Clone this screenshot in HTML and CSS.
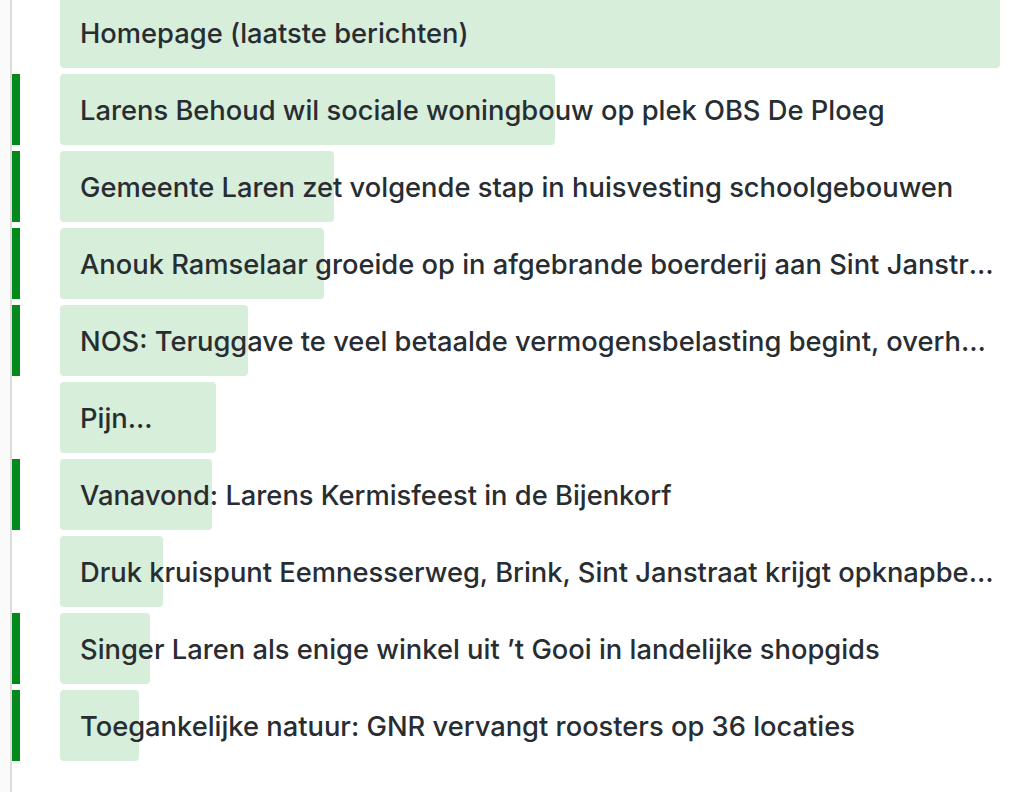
FILE: index.html
```html
<!DOCTYPE html>
<html lang="nl">
<head>
<meta charset="utf-8">
<title>Berichten</title>
<link rel="stylesheet" href="styles.css">
</head>
<body>
<div class="page">
  <div class="gutter"></div>
  <ul class="list">
    <li class="row"><span class="mark"></span><div class="item"><span class="fill" style="width:100%"></span><span class="label">Homepage (laatste berichten)</span></div></li>
    <li class="row unread"><span class="mark"></span><div class="item"><span class="fill" style="width:495px"></span><span class="label">Larens Behoud wil sociale woningbouw op plek OBS De Ploeg</span></div></li>
    <li class="row unread"><span class="mark"></span><div class="item"><span class="fill" style="width:274px"></span><span class="label">Gemeente Laren zet volgende stap in huisvesting schoolgebouwen</span></div></li>
    <li class="row unread"><span class="mark"></span><div class="item"><span class="fill" style="width:264px"></span><span class="label">Anouk Ramselaar groeide op in afgebrande boerderij aan Sint Janstraat</span></div></li>
    <li class="row unread"><span class="mark"></span><div class="item"><span class="fill" style="width:188px"></span><span class="label">NOS: Teruggave te veel betaalde vermogensbelasting begint, overheid</span></div></li>
    <li class="row"><span class="mark"></span><div class="item"><span class="fill" style="width:156px"></span><span class="label">Pijn...</span></div></li>
    <li class="row unread"><span class="mark"></span><div class="item"><span class="fill" style="width:152px"></span><span class="label">Vanavond: Larens Kermisfeest in de Bijenkorf</span></div></li>
    <li class="row"><span class="mark"></span><div class="item"><span class="fill" style="width:103px"></span><span class="label">Druk kruispunt Eemnesserweg, Brink, Sint Janstraat krijgt opknapbeurt</span></div></li>
    <li class="row unread"><span class="mark"></span><div class="item"><span class="fill" style="width:90px"></span><span class="label">Singer Laren als enige winkel uit ’t Gooi in landelijke shopgids</span></div></li>
    <li class="row unread"><span class="mark"></span><div class="item"><span class="fill" style="width:79px"></span><span class="label">Toegankelijke natuur: GNR vervangt roosters op 36 locaties</span></div></li>
  </ul>
</div>
</body>
</html>
```
FILE: styles.css
```css
html, body {
  margin: 0;
  padding: 0;
  background: #ffffff;
}
body {
  font-family: Inter, "Noto Sans", "Liberation Sans", sans-serif;
  color: #282d32;
}
.page {
  display: flex;
  min-height: 100vh;
  overflow: hidden;
}
.gutter {
  width: 10px;
  flex: 0 0 10px;
  background: #fafafa;
  border-right: 2px solid #dcdcdc;
}
.list {
  list-style: none;
  margin: -3px 0 0 0;
  padding: 0;
  display: flex;
  flex-direction: column;
  gap: 6px;
}
.row {
  display: flex;
  height: 71px;
}
.mark {
  flex: 0 0 8px;
  width: 8px;
}
.row.unread .mark {
  background: #02891a;
}
.item {
  position: relative;
  margin-left: 40px;
  width: 940px;
  height: 71px;
  display: flex;
  align-items: center;
}
.fill {
  position: absolute;
  left: 0;
  top: 0;
  bottom: 0;
  background: #d7eedb;
  border-radius: 4px;
}
.label {
  position: relative;
  display: block;
  padding-left: 20px;
  padding-top: 1px;
  font-size: 27.3px;
  font-weight: 500;
  white-space: nowrap;
  overflow: hidden;
  text-overflow: ellipsis;
  width: 100%;
  box-sizing: border-box;
}
```
